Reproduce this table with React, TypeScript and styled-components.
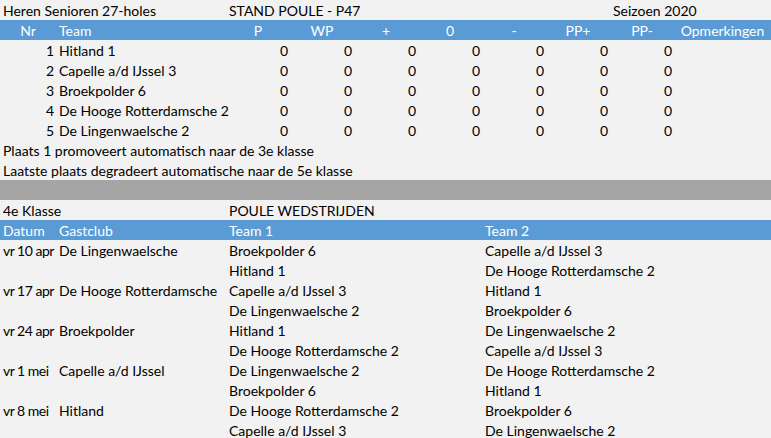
import React from "react";
import styled, { createGlobalStyle } from "styled-components";

const GlobalStyle = createGlobalStyle`
  html, body { margin: 0; padding: 0; background: #f2f2f2; }
  body { font-family: "Lato", "Open Sans", sans-serif; }
`;

const STAND_COLS = "56px 170px repeat(7, 64px) 1fr";
const MATCH_COLS = "56px 170px 256px 1fr";

const Sheet = styled.div`
  width: 771px;
  height: 438px;
  overflow: hidden;
  background: #f2f2f2;
  display: flex;
  flex-direction: column;
  font-family: "Lato", "Open Sans", sans-serif;
  font-size: 14px;
  color: #000;
`;

const Row = styled.div<{ $cols: string; $kind?: "plain" | "header" | "bar" }>`
  display: grid;
  grid-template-columns: ${(p) => p.$cols};
  height: 20px;
  flex: 0 0 20px;
  align-items: center;
  background: ${(p) => (p.$kind === "header" ? "#5b9bd5" : p.$kind === "bar" ? "#a5a5a5" : "transparent")};
  color: ${(p) => (p.$kind === "header" ? "#ffffff" : "#000000")};
`;

const Cell = styled.div<{ $align?: "left" | "right" | "center"; $span?: number; $tight?: boolean }>`
  grid-column: span ${(p) => p.$span ?? 1};
  text-align: ${(p) => p.$align ?? "left"};
  padding: 1px ${(p) => (p.$align === "right" ? "2px" : "3px")} 0 3px;
  white-space: nowrap;
  overflow: visible;
  line-height: 20px;
  letter-spacing: ${(p) => (p.$tight ? "-0.5px" : "normal")};
`;

const Empty = styled.div<{ $span?: number }>`
  grid-column: span ${(p) => p.$span ?? 1};
`;

const statHeads = ["P", "WP", "+", "0", "-", "PP+", "PP-"];
const teams = ["Hitland 1", "Capelle a/d IJssel 3", "Broekpolder 6", "De Hooge Rotterdamsche 2", "De Lingenwaelsche 2"];

const matches: { date?: string; club?: string; t1: string; t2: string }[] = [
  { date: "vr 10 apr", club: "De Lingenwaelsche", t1: "Broekpolder 6", t2: "Capelle a/d IJssel 3" },
  { t1: "Hitland 1", t2: "De Hooge Rotterdamsche 2" },
  { date: "vr 17 apr", club: "De Hooge Rotterdamsche", t1: "Capelle a/d IJssel 3", t2: "Hitland 1" },
  { t1: "De Lingenwaelsche 2", t2: "Broekpolder 6" },
  { date: "vr 24 apr", club: "Broekpolder", t1: "Hitland 1", t2: "De Lingenwaelsche 2" },
  { t1: "De Hooge Rotterdamsche 2", t2: "Capelle a/d IJssel 3" },
  { date: "vr 1 mei", club: "Capelle a/d IJssel", t1: "De Lingenwaelsche 2", t2: "De Hooge Rotterdamsche 2" },
  { t1: "Broekpolder 6", t2: "Hitland 1" },
  { date: "vr 8 mei", club: "Hitland", t1: "De Hooge Rotterdamsche 2", t2: "Broekpolder 6" },
  { t1: "Capelle a/d IJssel 3", t2: "De Lingenwaelsche 2" },
];

export default function App() {
  return (
    <>
      <GlobalStyle />
      <Sheet>
        <Row $cols={STAND_COLS}>
          <Cell $span={2}>Heren Senioren 27-holes</Cell>
          <Cell $span={6}>STAND POULE - P47</Cell>
          <Cell $span={2}>Seizoen 2020</Cell>
        </Row>
        <Row $cols={STAND_COLS} $kind="header">
          <Cell $align="center">Nr</Cell>
          <Cell>Team</Cell>
          {statHeads.map((h) => (
            <Cell key={h} $align="center">{h}</Cell>
          ))}
          <Cell $align="center">Opmerkingen</Cell>
        </Row>
        {teams.map((t, i) => (
          <Row key={t} $cols={STAND_COLS}>
            <Cell $align="right">{i + 1}</Cell>
            <Cell>{t}</Cell>
            {statHeads.map((h) => (
              <Cell key={h} $align="right">0</Cell>
            ))}
            <Empty />
          </Row>
        ))}
        <Row $cols={STAND_COLS}>
          <Cell $span={10}>Plaats 1 promoveert automatisch naar de 3e klasse</Cell>
        </Row>
        <Row $cols={STAND_COLS}>
          <Cell $span={10}>Laatste plaats degradeert automatische naar de 5e klasse</Cell>
        </Row>
        <Row $cols={STAND_COLS} $kind="bar" />
        <Row $cols={MATCH_COLS}>
          <Cell $span={2}>4e Klasse</Cell>
          <Cell $span={2}>POULE WEDSTRIJDEN</Cell>
        </Row>
        <Row $cols={MATCH_COLS} $kind="header">
          <Cell>Datum</Cell>
          <Cell>Gastclub</Cell>
          <Cell>Team 1</Cell>
          <Cell>Team 2</Cell>
        </Row>
        {matches.map((m, i) => (
          <Row key={i} $cols={MATCH_COLS}>
            <Cell $tight>{m.date ?? ""}</Cell>
            <Cell>{m.club ?? ""}</Cell>
            <Cell>{m.t1}</Cell>
            <Cell>{m.t2}</Cell>
          </Row>
        ))}
      </Sheet>
    </>
  );
}
